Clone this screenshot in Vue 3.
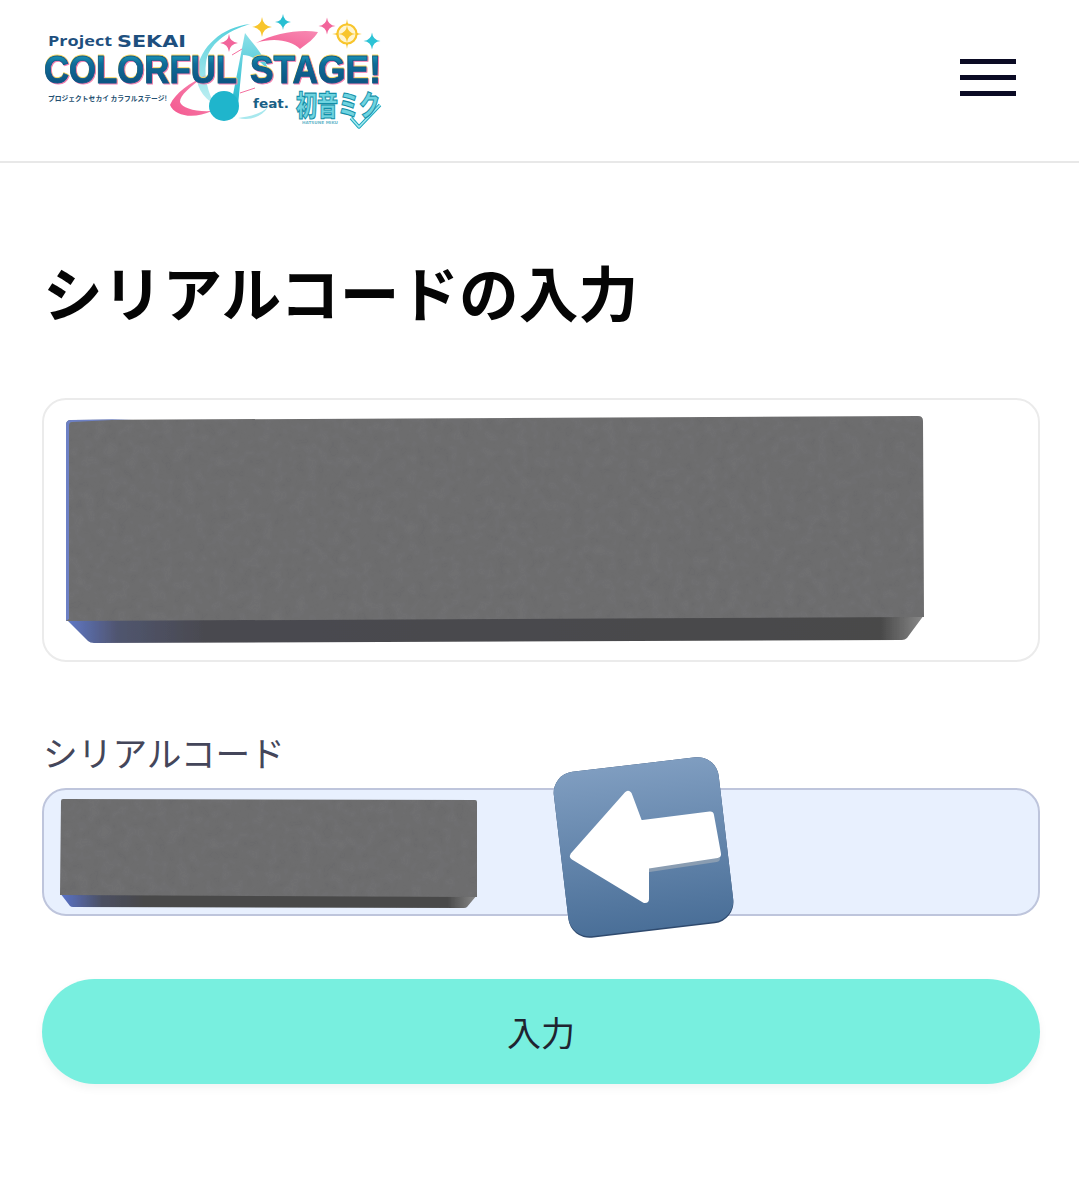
<script setup>
function star(cx, cy, r, f = 0.24) {
  const k = r * f
  return `M${cx} ${cy - r}Q${cx + k * 0.4} ${cy - k * 0.4} ${cx + r} ${cy}Q${cx + k * 0.4} ${cy + k * 0.4} ${cx} ${cy + r}Q${cx - k * 0.4} ${cy + k * 0.4} ${cx - r} ${cy}Q${cx - k * 0.4} ${cy - k * 0.4} ${cx} ${cy - r}Z`
}
const stars = [
  { x: 232, y: 22, r: 10, c: '#f8c52c' },
  { x: 253, y: 17, r: 8, c: '#27bfd2' },
  { x: 297, y: 21, r: 8.5, c: '#f2659b' },
  { x: 342, y: 36, r: 8.5, c: '#2cc3d6' },
  { x: 199, y: 38, r: 9, c: '#f2659b' }
]
</script>

<template>
  <div class="page">
    <header class="top">
      <svg class="logo" viewBox="0 0 370 130" aria-label="Project SEKAI COLORFUL STAGE! feat. 初音ミク">
        <defs>
          <linearGradient id="ring" x1="0" y1="1" x2="1" y2="0">
            <stop offset="0" stop-color="#f4588f" />
            <stop offset="1" stop-color="#f78ab3" />
          </linearGradient>
          <linearGradient id="arc" x1="0" y1="0" x2="0" y2="1">
            <stop offset="0" stop-color="#55d0dc" />
            <stop offset="1" stop-color="#c2f0f3" />
          </linearGradient>
          <linearGradient id="note" x1="0" y1="0" x2="0" y2="1">
            <stop offset="0" stop-color="#8ce0e8" />
            <stop offset="1" stop-color="#22b8cd" />
          </linearGradient>
          <linearGradient id="word" x1="0" y1="0" x2="0" y2="1">
            <stop offset="0" stop-color="#22b4cc" />
            <stop offset="0.35" stop-color="#0f6c98" />
            <stop offset="1" stop-color="#0b4a78" />
          </linearGradient>
        </defs>
        <path d="M220 19C192 22 170 42 167 66C165 80 172 92 185 100C178 88 174 72 176 58C178 40 196 26 220 19Z" fill="url(#arc)" />
        <path d="M140 100C145 88 160 78 176 70C160 82 150 90 150 97C152 103 165 107 182 106C165 114 145 112 140 100Z" fill="url(#ring)" />
        <path d="M226 38C245 28 270 24 288 27C284 34 278 38 270 44C262 36 245 32 226 38Z" fill="url(#ring)" />
        <path d="M202 50L212 44M210 88L225 83" stroke="#f4709f" stroke-width="1" fill="none" />
        <path d="M208 113C220 112 232 108 238 102C232 112 220 116 208 113Z" fill="#a8e8ee" />
        <path d="M215 28C222 38 235 50 238 65C230 55 220 50 213 50L208 100L201 100Z" fill="url(#note)" />
        <circle cx="194" cy="101" r="15" fill="#1fb5cc" />
        <path v-for="s in stars" :key="s.x" :d="star(s.x, s.y, s.r)" :fill="s.c" />
        <path :d="star(317, 29, 15)" fill="#f8c52c" />
        <circle cx="317" cy="29" r="9.5" fill="#fff5cf" stroke="#f8c52c" stroke-width="2.2" />
        <path :d="star(317, 29, 8.5)" fill="#f8c52c" />
        <text class="t-proj" x="18" y="41" textLength="64" lengthAdjust="spacingAndGlyphs">Project</text>
        <text class="t-sekai" x="87" y="42" textLength="69" lengthAdjust="spacingAndGlyphs">SEKAI</text>
        <text class="t-cs" x="14" y="78" fill="url(#word)" textLength="193" lengthAdjust="spacingAndGlyphs">COLORFUL</text>
        <text class="t-cs" x="220" y="78" fill="url(#word)" textLength="131" lengthAdjust="spacingAndGlyphs">STAGE!</text>
        <text class="t-sub" x="18" y="96" textLength="119" lengthAdjust="spacingAndGlyphs">プロジェクトセカイ カラフルステージ!</text>
        <text class="t-feat" x="223" y="103" textLength="36" lengthAdjust="spacingAndGlyphs">feat.</text>
        <path d="M350 100L329 122L321 113" fill="none" stroke="#1aa7bd" stroke-width="3.4" stroke-linejoin="round" />
        <path d="M350 100L329 122L321 113" fill="none" stroke="#a6e8ef" stroke-width="1.6" stroke-linejoin="round" />
        <text class="t-miku" x="266" y="111" textLength="84" lengthAdjust="spacingAndGlyphs">初音ミク</text>
        <text class="t-hat" x="272" y="119" textLength="36" lengthAdjust="spacingAndGlyphs">HATSUNE MIKU</text>
      </svg>
      <button class="menu" aria-label="menu"><span></span><span></span><span></span></button>
    </header>

    <main class="body">
      <h1 class="title">シリアルコードの入力</h1>

      <section class="card">
        <svg class="block block-a" viewBox="0 0 866 236">
          <defs>
            <linearGradient id="frontA" x1="0" y1="0" x2="1" y2="0">
              <stop offset="0" stop-color="#5f78c8" />
              <stop offset="0.06" stop-color="#50556f" />
              <stop offset="0.16" stop-color="#4a4a50" />
              <stop offset="0.95" stop-color="#4a4a4a" />
              <stop offset="1" stop-color="#8a8a8a" />
            </linearGradient>
            <filter id="soft"><feGaussianBlur stdDeviation="0.6" /></filter>
            <filter id="grain" x="-1%" y="-1%" width="102%" height="102%">
              <feGaussianBlur in="SourceGraphic" stdDeviation="0.6" result="base" />
              <feTurbulence type="fractalNoise" baseFrequency="0.09" numOctaves="2" seed="4" />
              <feColorMatrix values="0 0 0 0 0.36  0 0 0 0 0.36  0 0 0 0 0.36  0.12 0 0 0 -0.03" />
              <feComposite in2="base" operator="in" result="spots" />
              <feMerge><feMergeNode in="base" /><feMergeNode in="spots" /></feMerge>
            </filter>
          </defs>
          <path d="M4 207L26 229Q28 231 32 231L840 228Q843 228 845 226L862 203Z" fill="url(#frontA)" filter="url(#soft)" />
          <path d="M4 13Q4 8 9 8L856 4Q861 4 861 9L862 205L4 209Z" fill="#6c6c6d" filter="url(#grain)" />
          <path d="M4 13Q4 8 9 8L70 7L10 10Q7 10 7 14L7 207L4 209Z" fill="#6d80c4" filter="url(#soft)" />
        </svg>
      </section>

      <label class="label" for="serial">シリアルコード</label>
      <div class="field">
        <input id="serial" class="input" type="text" readonly />
        <svg class="block block-b" viewBox="0 0 426 118">
          <defs>
            <linearGradient id="frontB" x1="0" y1="0" x2="1" y2="0">
              <stop offset="0" stop-color="#5a74cc" />
              <stop offset="0.1" stop-color="#4c5062" />
              <stop offset="0.2" stop-color="#48484a" />
              <stop offset="0.93" stop-color="#4a4a4a" />
              <stop offset="1" stop-color="#8a8a8a" />
            </linearGradient>
          </defs>
          <path d="M4 99L14 112Q15 113 17 113L408 114Q410 114 411 113L421 101Z" fill="url(#frontB)" filter="url(#soft)" />
          <path d="M5 7Q5 5 7 5L419 6Q421 6 421 8L421 103L4 101Z" fill="#6c6c6d" filter="url(#grain)" />
        </svg>
        <svg class="arrow" viewBox="0 0 210 210">
          <defs>
            <linearGradient id="tile" x1="0.5" y1="0" x2="0.5" y2="1">
              <stop offset="0" stop-color="#7f9dc0" />
              <stop offset="1" stop-color="#4a6f98" />
            </linearGradient>
          </defs>
          <rect x="-83" y="-83" width="166" height="167" rx="21" fill="#2f4a6e" transform="translate(111.5 103) rotate(-6.7)" />
          <rect x="-83" y="-83" width="166" height="165.5" rx="21" fill="url(#tile)" transform="translate(111.5 103) rotate(-6.7)" />
          <path d="M117 124L184 114" fill="none" stroke="#8a9db2" stroke-width="8" stroke-linecap="round" />
          <path d="M42 112L96 51L107 80.5L178 71.5L185 110L113 121L113 155Z" fill="#fff" stroke="#fff" stroke-width="8" stroke-linejoin="round" />
        </svg>
      </div>

      <button class="submit">入力</button>
    </main>
  </div>
</template>

<style scoped>
.page {
  width: 1079px;
  min-height: 1179px;
  background: #fff;
  font-family: "Noto Sans CJK JP", "Noto Sans", sans-serif;
}
.top {
  box-sizing: border-box;
  height: 163px;
  border-bottom: 2px solid #e8e8e8;
  display: flex;
  align-items: flex-start;
  justify-content: space-between;
  padding: 0 63px 0 30px;
}
.logo {
  width: 370px;
  height: 130px;
  margin-top: 5px;
  display: block;
}
.t-proj { font: 700 15px "Open Sans", sans-serif; fill: #1e4f7e; }
.t-sekai { font: 700 15px "DejaVu Sans", sans-serif; fill: #1e4f7e; }
.t-cs {
  font: 700 38px "Liberation Sans", sans-serif;
  stroke: #0d5a88;
  stroke-width: 0.9;
  filter: drop-shadow(1.4px 1.2px 0 #f27fb0) drop-shadow(0.6px -0.8px 0 #f6d764);
}
.t-sub { font: 700 7px "Noto Sans CJK JP", sans-serif; fill: #244f70; }
.t-feat { font: 700 13px "DejaVu Sans", sans-serif; fill: #1a5f86; }
.t-miku { font: 900 28px "Noto Sans CJK JP", sans-serif; fill: #6fd4e0; stroke: #128fa8; stroke-width: 1.1; }
.t-hat { font: 700 4px "DejaVu Sans", sans-serif; fill: #6bb8cb; }
.menu {
  width: 56px;
  height: 37px;
  margin-top: 59px;
  padding: 0;
  border: 0;
  background: none;
  display: flex;
  flex-direction: column;
  justify-content: space-between;
}
.menu span {
  display: block;
  height: 5px;
  background: #0b0b24;
}
.body {
  padding: 0 39px 0 42px;
  display: flex;
  flex-direction: column;
}
.title {
  margin: 86px 0 0 1px;
  font-size: 59.7px;
  line-height: 84px;
  font-weight: 700;
  color: #050505;
  white-space: nowrap;
}
.card {
  position: relative;
  margin-top: 65px;
  height: 264px;
  box-sizing: border-box;
  border: 2px solid #ebebeb;
  border-radius: 24px;
}
.block {
  position: absolute;
  display: block;
}
.block-a {
  left: 18px;
  top: 12px;
  width: 866px;
  height: 236px;
}
.label {
  margin: 66px 0 0 1px;
  font-size: 34.7px;
  line-height: 48px;
  color: #44465a;
}
.field {
  position: relative;
  margin-top: 12px;
  height: 128px;
}
.input {
  display: block;
  width: 100%;
  height: 100%;
  box-sizing: border-box;
  background: #e8f0fe;
  border: 2px solid #bec5dc;
  border-radius: 24px;
  outline: none;
}
.block-b {
  left: 14px;
  top: 6px;
  width: 426px;
  height: 118px;
}
.arrow {
  position: absolute;
  left: 490px;
  top: -44px;
  width: 210px;
  height: 210px;
}
.submit {
  margin-top: 63px;
  height: 105px;
  border: 0;
  border-radius: 53px;
  background: #78efdf;
  box-shadow: 0 4px 10px rgba(0, 0, 0, 0.05);
  font-family: inherit;
  font-size: 34px;
  color: #1f2430;
  padding: 0;
}
</style>

<style>
html, body { margin: 0; background: #fff; }
</style>
